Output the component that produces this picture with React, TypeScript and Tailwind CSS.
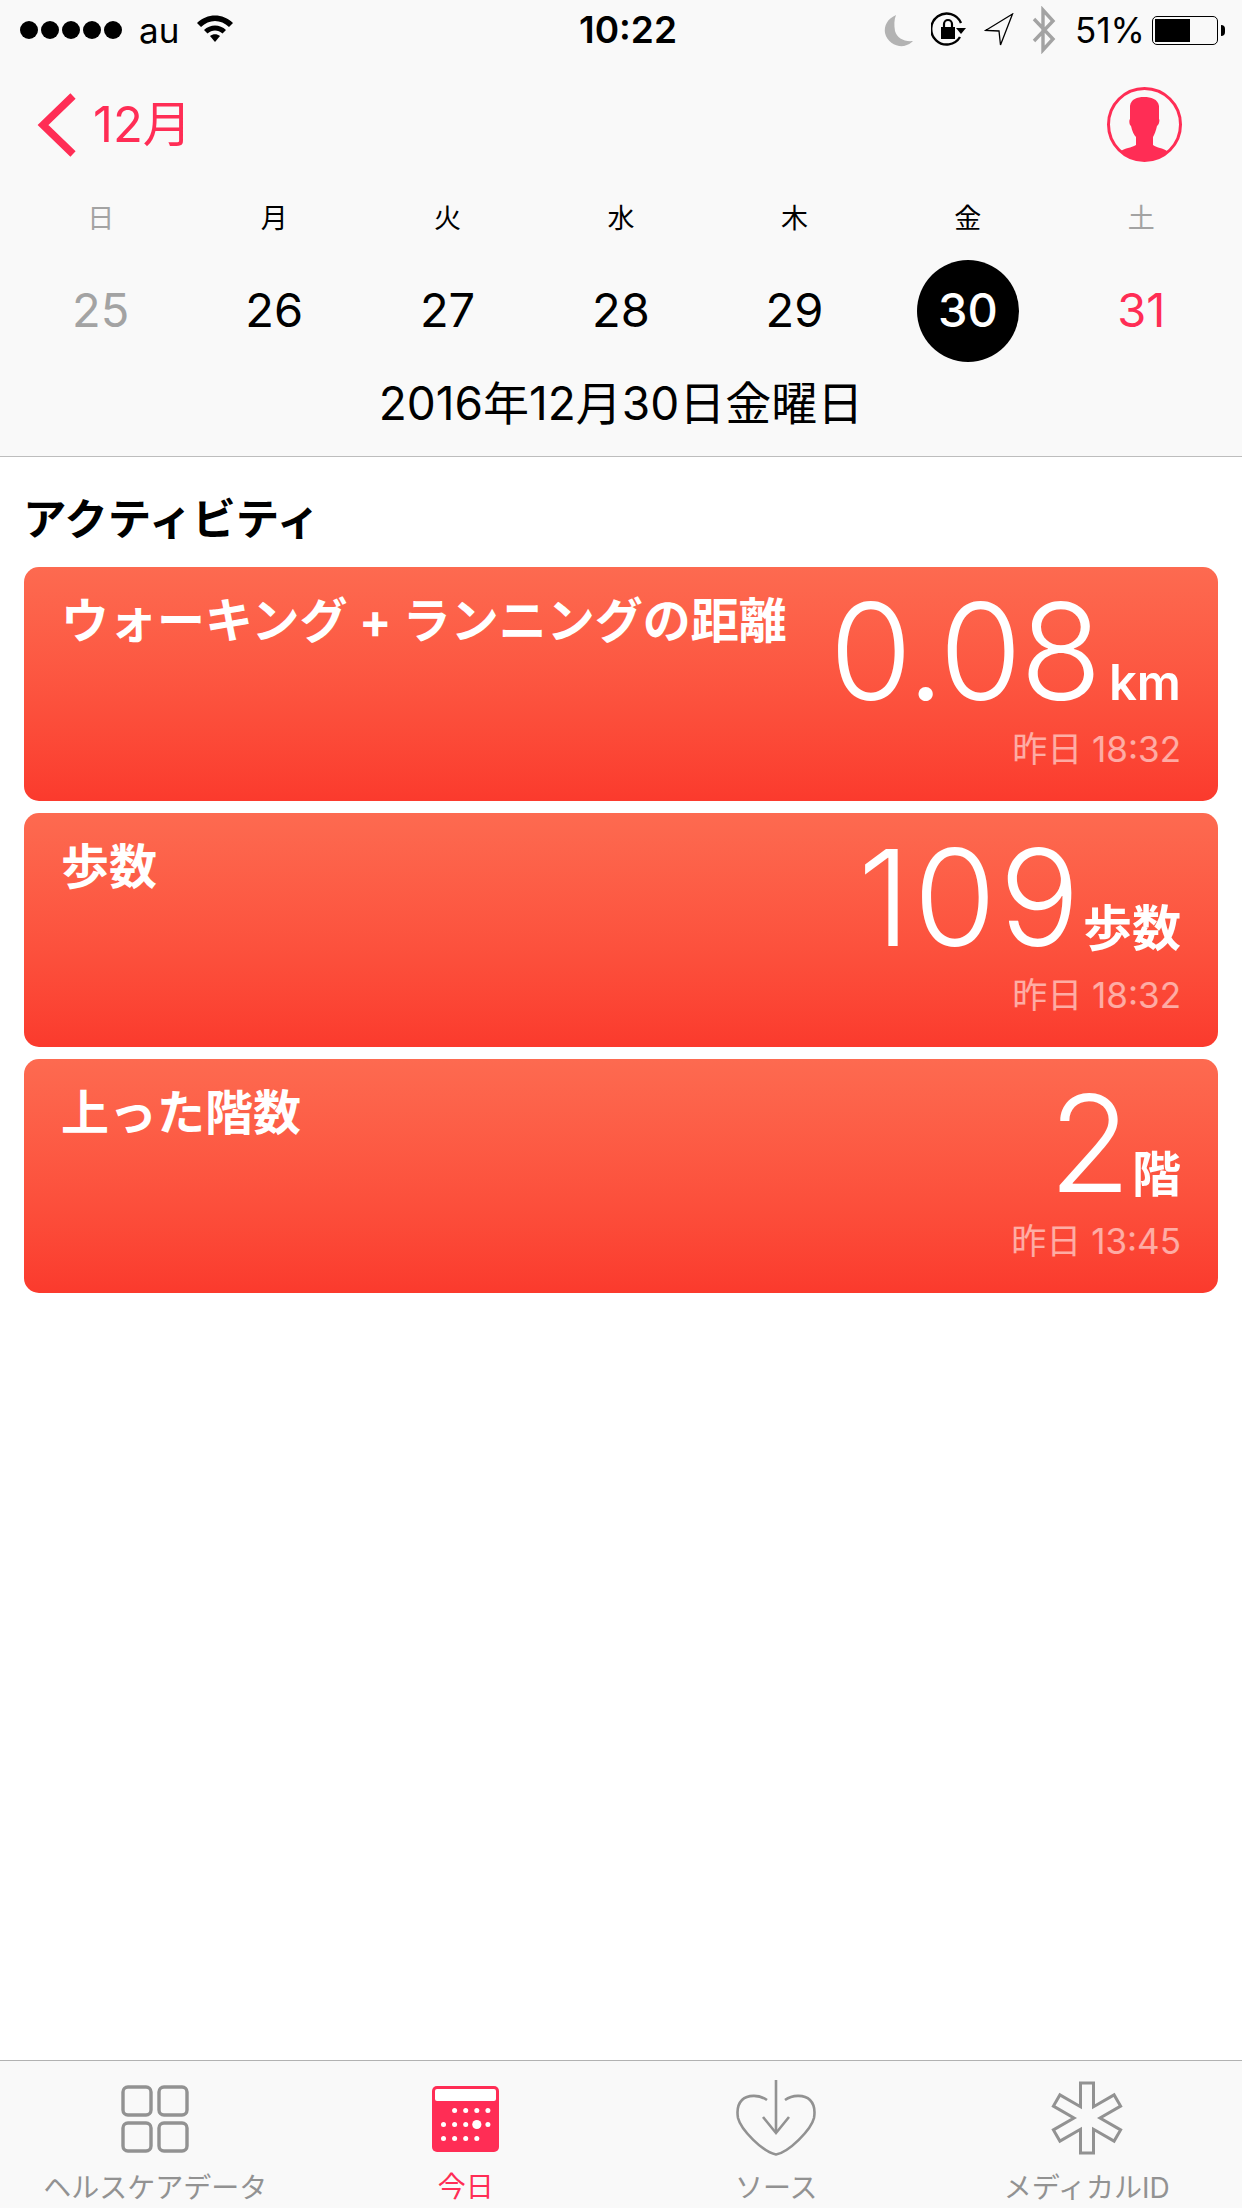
import React from 'react';

const jp = "font-['Inter','Noto_Sans_CJK_JP',sans-serif]";

const days = [
  { label: '日', num: '25', tone: 'text-[#a3a3a3]', head: 'text-[#a3a3a3]' },
  { label: '月', num: '26', tone: 'text-black', head: 'text-black' },
  { label: '火', num: '27', tone: 'text-black', head: 'text-black' },
  { label: '水', num: '28', tone: 'text-black', head: 'text-black' },
  { label: '木', num: '29', tone: 'text-black', head: 'text-black' },
  { label: '金', num: '30', tone: 'text-white', head: 'text-black', active: true },
  { label: '土', num: '31', tone: 'text-[#ff2d55]', head: 'text-[#a3a3a3]' },
];

const cards = [
  { title: 'ウォーキング + ランニングの距離', value: '0.08', valueClass: 'tracking-[-2px]', unit: 'km', unitClass: 'ml-[9px]', time: '昨日 18:32' },
  { title: '歩数', value: '109', valueClass: 'tracking-[3px]', unit: '歩数', unitClass: 'ml-0', time: '昨日 18:32' },
  { title: '上った階数', value: '2', valueClass: 'tracking-[1px]', unit: '階', unitClass: 'ml-0', time: '昨日 13:45' },
];

const starPoints = (() => {
  const pts: string[] = [];
  const cx = 37;
  const cy = 37;
  const len = 35;
  const hw = 6.5;
  for (let i = 0; i < 6; i++) {
    const a = (i * Math.PI) / 3;
    const rot = (x: number, y: number) =>
      `${(cx + x * Math.cos(a) - y * Math.sin(a)).toFixed(1)},${(cy + x * Math.sin(a) + y * Math.cos(a)).toFixed(1)}`;
    pts.push(rot(-hw, -len), rot(hw, -len), rot(hw, -hw / Math.tan(Math.PI / 6)));
  }
  return pts.join(' ');
})();

function StatusBar() {
  return (
    <div className="h-[60px] flex items-center justify-between pl-[20px] pr-[17px] relative">
      <div className="flex items-center">
        <div className="flex gap-[3px]">
          {[0, 1, 2, 3, 4].map((i) => (
            <div key={i} className="w-[18px] h-[18px] rounded-full bg-black" />
          ))}
        </div>
        <span className="ml-[17px] text-[35px] leading-none font-['Inter',sans-serif] text-black">au</span>
        <svg width="38" height="28" viewBox="0 0 38 28" className="ml-[17px] -mt-[4px]">
          <path d="M1 9 C11 -1 27 -1 37 9 L33 13 C25 5 13 5 5 13 Z" fill="#000" />
          <path d="M8 16 C14 10 24 10 30 16 L26.5 19.5 C22 15.5 16 15.5 11.5 19.5 Z" fill="#000" />
          <path d="M14 22 C17 19.5 21 19.5 24 22 L19 28 Z" fill="#000" />
        </svg>
      </div>
      <span className="absolute left-[579px] top-[12px] text-[37px] leading-[36px] font-semibold font-['Inter',sans-serif] text-black">10:22</span>
      <div className="flex items-center">
        <svg width="30" height="33" viewBox="0 0 30 33">
          <path d="M12 1 C3 5 0 12 1 19 C3 28 12 33 20 32 C24 31 27 29 29 27 C20 28 13 24 11 17 C10 11 10 6 12 1 Z" fill="#b3b3b3" />
        </svg>
        <svg width="36" height="36" viewBox="0 0 36 36" className="ml-[17px]">
          <path d="M29 25 A15.5 15.5 0 1 1 30 11" fill="none" stroke="#000" strokeWidth="2.4" />
          <path d="M25 16 L35 16 L30 22 Z" fill="#000" />
          <rect x="10" y="15" width="14" height="12" fill="#000" />
          <path d="M13 15 V12 A4 4 0 0 1 21 12 V15" fill="none" stroke="#000" strokeWidth="2.2" />
        </svg>
        <svg width="30" height="34" viewBox="0 0 30 34" className="ml-[17px]">
          <path d="M28.5 1 L1.5 17.5 L15 18 L16.5 32 Z" fill="none" stroke="#000" strokeWidth="1.3" />
        </svg>
        <svg width="24" height="48" viewBox="0 0 24 48" className="ml-[18px]">
          <path d="M2 13 L21 33 L11 44 L11 4 L21 15 L2 35" fill="none" stroke="#a3a3a3" strokeWidth="3.4" />
        </svg>
        <span className="ml-[19px] text-[35px] leading-none font-['Inter',sans-serif] text-black">51%</span>
        <div className="ml-[7px] w-[66px] h-[29px] rounded-[5px] border border-black p-[2px]">
          <div className="w-[35px] h-full bg-black" />
        </div>
        <div className="ml-[3px] w-[4px] h-[11px] rounded-r-full bg-black" />
      </div>
    </div>
  );
}

function NavRow() {
  return (
    <div className="h-[132px] flex items-center justify-between pl-[37px] pr-[60px] pb-[3px]">
      <div className="flex items-center">
        <svg width="40" height="64" viewBox="0 0 40 64">
          <path d="M36 3 L6 32 L36 61" fill="none" stroke="#ff2d55" strokeWidth="7.5" />
        </svg>
        <span className={`ml-[16px] text-[49px] leading-none text-[#ff2d55] ${jp}`}>12月</span>
      </div>
      <svg width="75" height="75" viewBox="0 0 75 75">
        <defs>
          <clipPath id="avatar-clip">
            <circle cx="37.5" cy="37.5" r="36" />
          </clipPath>
        </defs>
        <circle cx="37.5" cy="37.5" r="36" fill="none" stroke="#ff2d55" strokeWidth="3" />
        <path
          clipPath="url(#avatar-clip)"
          fill="#ff2d55"
          d="M37 10 C44 10 51 12 52 19 L52 32 C53 33 52 38 50 39 C49 44 47 48 46 50 L46 58 C50 61 56 61 60 64 L60 75 L14 75 L14 64 C18 61 24 61 29 58 L29 50 C27 48 25 44 24 39 C22 38 22 33 23 32 L23 19 C24 12 30 10 37 10 Z"
        />
      </svg>
    </div>
  );
}

function Calendar() {
  return (
    <div className="px-[14px]">
      <div className="h-[48px] pt-[5px] grid grid-cols-7 items-center">
        {days.map((d) => (
          <div key={d.label} className={`text-center text-[27px] leading-none ${d.head} ${jp}`}>{d.label}</div>
        ))}
      </div>
      <div className="mt-[20px] grid grid-cols-7">
        {days.map((d) => (
          <div key={d.num} className="flex justify-center">
            <div className={`w-[102px] h-[102px] pb-[4px] rounded-full flex items-center justify-center text-[47px] leading-none ${d.active ? 'bg-black font-medium' : ''} ${d.tone} font-['Inter',sans-serif]`}>
              {d.num}
            </div>
          </div>
        ))}
      </div>
    </div>
  );
}

type Metric = { title: string; value: string; valueClass: string; unit: string; unitClass: string; time: string };

function MetricCard({ title, value, valueClass, unit, unitClass, time }: Metric) {
  return (
    <div className="h-[234px] rounded-[15px] bg-gradient-to-b from-[#fd6a50] to-[#fb3a2d] pl-[37px] pr-[37px] flex justify-between text-white">
      <div className={`pt-[26px] text-[48px] leading-[56px] font-bold whitespace-nowrap ${jp}`}>
        {title}
      </div>
      <div className="flex flex-col items-end pt-[17px]">
        <div className="flex items-baseline">
          <span className={`text-[134px] leading-[134px] font-light font-['Inter',sans-serif] ${valueClass}`}>{value}</span>
          <span className={`text-[49px] leading-none font-semibold ${unitClass} ${jp}`}>{unit}</span>
        </div>
        <span className={`mt-[11px] text-[35px] leading-[40px] text-white/55 ${jp}`}>{time}</span>
      </div>
    </div>
  );
}

function TabBar() {
  return (
    <div className="h-[148px] bg-[#f9f9f9] border-t border-[#b2b2b2] grid grid-cols-4">
      <div className="flex flex-col items-center">
        <svg width="68" height="68" viewBox="0 0 68 68" className="mt-[24px]">
          <g fill="none" stroke="#929292" strokeWidth="3.4">
            <rect x="2" y="2" width="28" height="28" rx="5" />
            <rect x="38" y="2" width="28" height="28" rx="5" />
            <rect x="2" y="38" width="28" height="28" rx="5" />
            <rect x="38" y="38" width="28" height="28" rx="5" />
          </g>
        </svg>
        <span className={`mt-[18px] text-[28px] leading-[34px] text-[#929292] ${jp}`}>ヘルスケアデータ</span>
      </div>
      <div className="flex flex-col items-center">
        <svg width="67" height="66" viewBox="0 0 67 66" className="mt-[25px]">
          <rect width="67" height="66" rx="5" fill="#ff2d55" />
          <rect x="3" y="3" width="61" height="12" rx="2" fill="#fff" />
          <g fill="#fff">
            {[22.6, 33.7, 44.8, 55.9].map((x) => <circle key={x} cx={x} cy="24.5" r="2.5" />)}
            {[11.5, 22.6, 33.7, 55.9].map((x) => <circle key={x} cx={x} cy="38.5" r="2.5" />)}
            <circle cx="44.8" cy="38.5" r="4.6" />
            {[11.5, 22.6, 33.7, 44.8].map((x) => <circle key={x} cx={x} cy="52.5" r="2.5" />)}
          </g>
        </svg>
        <span className={`mt-[18px] text-[28px] leading-[34px] text-[#ff2d55] ${jp}`}>今日</span>
      </div>
      <div className="flex flex-col items-center">
        <svg width="80" height="76" viewBox="0 0 80 76" className="mt-[19px]">
          <g fill="none" stroke="#929292" strokeWidth="2.6">
            <path d="M31 20 C24 15 12 14 6 20 C1 25 1 32 2 38 C5 50 27 72 40 74.5 C53 72 75 50 78 38 C79 32 79 25 74 20 C68 14 56 15 49 20" />
            <path d="M40 0 L40 52" />
            <path d="M27 37 L40 53 L53 37" />
          </g>
        </svg>
        <span className={`mt-[15px] text-[28px] leading-[34px] text-[#929292] ${jp}`}>ソース</span>
      </div>
      <div className="flex flex-col items-center">
        <svg width="74" height="74" viewBox="0 0 74 74" className="mt-[20px]">
          <polygon points={starPoints} fill="none" stroke="#929292" strokeWidth="3" />
        </svg>
        <span className={`mt-[16px] text-[28px] leading-[34px] text-[#929292] ${jp}`}>メディカルID</span>
      </div>
    </div>
  );
}

export default function App() {
  return (
    <div className="w-[1242px] h-[2208px] bg-white flex flex-col overflow-hidden">
      <div className="h-[457px] bg-[#f9f9f9] border-b border-[#bdbdbd]">
        <StatusBar />
        <NavRow />
        <Calendar />
        <div className={`mt-[11px] h-[60px] flex items-center justify-center text-[46px] leading-none text-black ${jp}`}>
          2016年12月30日金曜日
        </div>
      </div>
      <div className="flex-1 px-[24px]">
        <div className={`mt-[39px] -ml-[1px] h-[48px] flex items-center text-[43.5px] leading-none font-bold text-black ${jp}`}>
          アクティビティ
        </div>
        <div className="mt-[23px] flex flex-col gap-[12px]">
          {cards.map((c) => (
            <MetricCard key={c.title} {...c} />
          ))}
        </div>
      </div>
      <TabBar />
    </div>
  );
}
